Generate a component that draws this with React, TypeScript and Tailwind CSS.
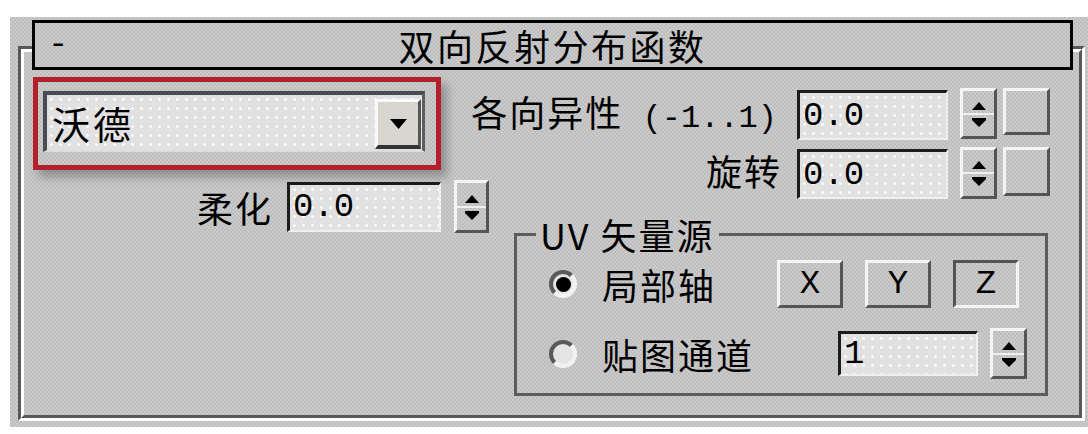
import React from 'react'

// dithered 3ds Max panel grey
const panel =
  'bg-[#c4c4c4] bg-[image:repeating-conic-gradient(#bdbdbd_0%_25%,#cbcbcb_0%_50%)] bg-[length:4px_4px]'
const field =
  'bg-[#e1e1e1] bg-[image:radial-gradient(circle,#fbfbfb_1px,transparent_1.7px)] bg-[length:9px_9px]'
const raised =
  'border-[3px] border-t-[#f4f4f4] border-l-[#f4f4f4] border-r-[#555] border-b-[#555]'
const pressed =
  'border-[3px] border-t-[#555] border-l-[#555] border-r-[#f4f4f4] border-b-[#f4f4f4]'
const mono = "font-['Liberation_Mono',monospace]"
const label = 'text-[36px] leading-[40px] tracking-[2px] whitespace-nowrap'

const Up = () => (
  <svg width="14" height="8" viewBox="0 0 14 8">
    <polygon points="7,0 14,8 0,8" fill="#000" />
  </svg>
)

const Down = () => (
  <svg width="14" height="9" viewBox="0 0 14 9">
    <rect x="0" y="0" width="14" height="2" fill="#000" />
    <polygon points="0,2 14,2 7,9" fill="#000" />
  </svg>
)

const Spinner: React.FC<{ size: string }> = ({ size }) => (
  <div className={`flex shrink-0 flex-col ${raised} ${size}`}>
    <div className="flex flex-1 items-end justify-center border-b-[2px] border-b-[#efefef] pb-[3px]">
      <Up />
    </div>
    <div className="flex flex-1 items-start justify-center pt-[3px]">
      <Down />
    </div>
  </div>
)

const NumField: React.FC<{ value: string; size: string }> = ({ value, size }) => (
  <div
    className={`flex shrink-0 items-center border-t-[3px] border-l-[3px] border-r-[2px] border-b-[2px] border-t-[#1c1c1c] border-l-[#1c1c1c] border-r-[#f0f0f0] border-b-[#f0f0f0] pl-[3px] ${field} ${size}`}
  >
    <span className={`${mono} text-[34px] leading-none`}>{value}</span>
  </div>
)

const Radio: React.FC<{ checked?: boolean }> = ({ checked }) => (
  <div className="flex h-[28px] w-[28px] shrink-0 items-center justify-center rounded-full border-[4px] border-t-[#5a5a5a] border-l-[#5a5a5a] border-r-[#f2f2f2] border-b-[#f2f2f2] bg-[#e4e4e4]">
    {checked && <div className="h-[15px] w-[15px] rounded-full bg-black" />}
  </div>
)

const AxisButton: React.FC<{ text: string; down?: boolean }> = ({ text, down }) => (
  <div className={`flex h-[48px] w-[66px] shrink-0 items-center justify-center ${down ? pressed : raised}`}>
    <span className={`${mono} text-[34px] leading-none`}>{text}</span>
  </div>
)

export default function App() {
  return (
    <div className="h-[434px] w-[1088px] bg-white pt-[17px] pl-[10px] font-['Noto_Sans_CJK_SC',sans-serif] text-black">
      <div className={`h-[410px] w-[1078px] pt-[29px] pl-[8px] ${panel}`}>
        {/* etched rollout frame */}
        <div className="h-[375px] w-[1067px] border-[3px] border-t-[#585858] border-l-[#585858] border-r-white border-b-white">
          <div className="flex h-full flex-col border-[3px] border-t-white border-l-white border-r-[#585858] border-b-[#585858]">
            {/* rollout title bar */}
            <div
              className={`-mt-[32px] mr-[6px] ml-[8px] grid h-[50px] shrink-0 grid-cols-[1fr_auto_1fr] items-center border-[3px] border-black ${panel}`}
            >
              <span className={`${mono} pl-[13px] text-[34px] leading-none`}>-</span>
              <span className="text-[36px] leading-[40px] tracking-[2.5px]">双向反射分布函数</span>
              <span />
            </div>

            <div className="flex pl-[9px]">
              {/* left column */}
              <div className="flex w-[457px] shrink-0 flex-col">
                <div className="mt-[7px] h-[93px] w-[408px] border-[5px] border-[#b3202b] pt-[9px] pl-[5px] shadow-[6px_7px_9px_rgba(0,0,0,0.28)]">
                  <div
                    className={`flex h-[61px] w-[382px] justify-between border-t-[4px] border-l-[4px] border-r-[3px] border-b-[2px] border-t-[#484d53] border-l-[#484d53] border-r-[#5d5d5d] border-b-[#dcdcdc] pr-[1px] pl-[5px] ${field}`}
                  >
                    <span className="self-center text-[38px] leading-[40px] tracking-[3px]">沃德</span>
                    <div className="mb-[1px] flex h-[50px] w-[46px] items-center justify-center self-end border-t-[3px] border-l-[3px] border-r-[3px] border-b-[4px] border-t-[#fafafa] border-l-[#fafafa] border-r-[#555] border-b-[#333] bg-[#d8d6ce]">
                      <svg width="17" height="10" viewBox="0 0 17 10">
                        <polygon points="0,0 17,0 8.5,10" fill="#000" />
                      </svg>
                    </div>
                  </div>
                </div>

                <div className="mt-[10px] flex items-center justify-end pr-[1px]">
                  <span className={`mr-[14px] ${label}`}>柔化</span>
                  <NumField value="0.0" size="h-[50px] w-[154px]" />
                  <div className="ml-[13px]">
                    <Spinner size="h-[53px] w-[35px]" />
                  </div>
                </div>
              </div>

              {/* right column */}
              <div className="flex w-[560px] shrink-0 flex-col">
                <div className="mt-[18px] flex items-start justify-end">
                  <span className={`mt-[3px] mr-[20px] shrink-0 ${label}`}>
                    各向异性<span className={`${mono} text-[32px] tracking-normal`}> (-1..1)</span>
                  </span>
                  <div className="mt-[2px] shrink-0">
                    <NumField value="0.0" size="h-[50px] w-[151px]" />
                  </div>
                  <div className="ml-[12px] shrink-0">
                    <Spinner size="h-[51px] w-[37px]" />
                  </div>
                  <div className={`ml-[6px] h-[47px] w-[47px] shrink-0 ${raised}`} />
                </div>

                <div className="mt-[7px] flex items-start justify-end">
                  <span className={`mt-[3px] mr-[15px] shrink-0 ${label}`}>旋转</span>
                  <div className="mt-[2px] shrink-0">
                    <NumField value="0.0" size="h-[50px] w-[151px]" />
                  </div>
                  <div className="ml-[12px] shrink-0">
                    <Spinner size="h-[52px] w-[37px]" />
                  </div>
                  <div className={`ml-[6px] h-[49px] w-[47px] shrink-0 ${raised}`} />
                </div>

                {/* UV source group */}
                <fieldset className="mt-[15px] ml-[24px] w-[534px] self-start border-[3px] border-[#5c5c5c] pb-[14px]">
                  <legend className={`ml-[19px] px-[4px] ${label}`}>UV 矢量源</legend>

                  <div className="mt-[6px] flex h-[48px] items-center pl-[32px]">
                    <Radio checked />
                    <span className={`ml-[25px] w-[150px] ${label}`}>局部轴</span>
                    <div className="ml-[25px] flex gap-[22px]">
                      <AxisButton text="X" />
                      <AxisButton text="Y" />
                      <AxisButton text="Z" down />
                    </div>
                  </div>

                  <div className="mt-[20px] flex h-[51px] items-center pl-[32px]">
                    <Radio />
                    <span className={`ml-[25px] w-[211px] ${label}`}>贴图通道</span>
                    <div className="ml-[25px]">
                      <NumField value="1" size="h-[45px] w-[140px]" />
                    </div>
                    <div className="ml-[12px]">
                      <Spinner size="h-[51px] w-[37px]" />
                    </div>
                  </div>
                </fieldset>
              </div>
            </div>
          </div>
        </div>
      </div>
    </div>
  )
}
